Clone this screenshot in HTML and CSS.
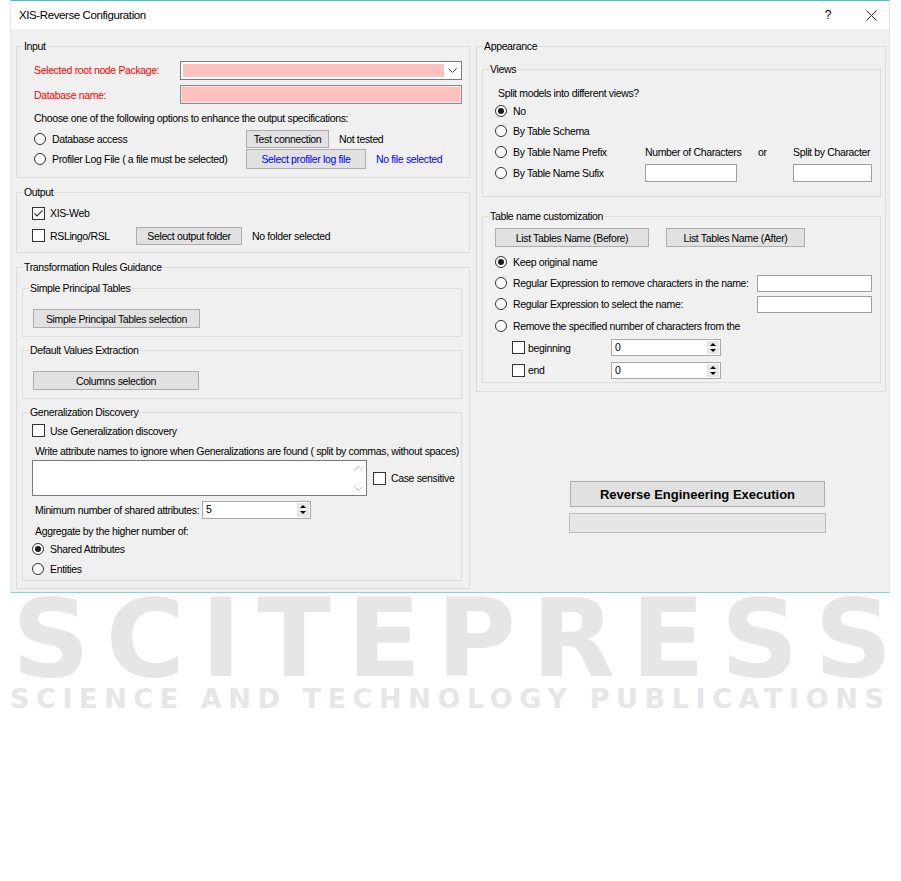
FILE: index.html
```html
<!DOCTYPE html>
<html lang="en">
<head>
  <meta charset="UTF-8">
  <title>XIS-Reverse Configuration</title>
  <link rel="stylesheet" href="styles.css">
</head>
<body>
  <div class="window">
    <!-- Title bar -->
    <div class="titlebar">
      <span class="title">XIS-Reverse Configuration</span>
      <span class="help">?</span>
      <svg class="close" width="11" height="11" viewBox="0 0 11 11"><path d="M0.5 0.5 L10.5 10.5 M10.5 0.5 L0.5 10.5" stroke="#222" stroke-width="1"/></svg>
    </div>

    <div class="client">
      <!-- Left column -->
      <div class="col-left">
        <fieldset class="group">
          <legend>Input</legend>
          <div class="input-rows">
            <div class="row">
              <span class="req-label">Selected root node Package:</span>
              <div class="combo">
                <div class="combo-fill"></div>
                <div class="combo-arrow"><svg width="9" height="5" viewBox="0 0 9 5"><path d="M0.5 0.5 L4.5 4.5 L8.5 0.5" fill="none" stroke="#444" stroke-width="1"/></svg></div>
              </div>
            </div>
            <div class="row">
              <span class="req-label">Database name:</span>
              <div class="textbox pink"></div>
            </div>
            <div class="row">Choose one of the following options to enhance the output specifications:</div>
            <div class="row">
              <span class="opt opt-input"><span class="radio"></span>Database access</span>
              <button class="btn btn-test">Test connection</button>
              <span class="status">Not tested</span>
            </div>
            <div class="row">
              <span class="opt opt-input"><span class="radio"></span>Profiler Log File ( a file must be selected)</span>
              <button class="btn btn-profiler">Select profiler log file</button>
              <span class="status blue">No file selected</span>
            </div>
          </div>
        </fieldset>

        <fieldset class="group">
          <legend>Output</legend>
          <div class="output-rows">
            <div class="row">
              <span class="opt"><span class="check"><svg width="11" height="11" viewBox="0 0 11 11"><path d="M1.5 5.5 L4 8 L9.5 2.5" fill="none" stroke="#333" stroke-width="1.1"/></svg></span>XIS-Web</span>
            </div>
            <div class="row">
              <span class="opt opt-output"><span class="check"></span>RSLingo/RSL</span>
              <button class="btn btn-folder">Select output folder</button>
              <span class="status">No folder selected</span>
            </div>
          </div>
        </fieldset>

        <fieldset class="group">
          <legend>Transformation Rules Guidance</legend>
          <div class="rules-body">
            <fieldset class="group">
              <legend>Simple Principal Tables</legend>
              <div class="sub-body">
                <button class="btn btn-simple">Simple Principal Tables selection</button>
              </div>
            </fieldset>
            <fieldset class="group">
              <legend>Default Values Extraction</legend>
              <div class="sub-body">
                <button class="btn btn-columns">Columns selection</button>
              </div>
            </fieldset>
            <fieldset class="group">
              <legend>Generalization Discovery</legend>
              <div class="gen-rows">
                <div class="row"><span class="opt"><span class="check"></span>Use Generalization discovery</span></div>
                <div class="row indent">Write attribute names to ignore when Generalizations are found ( split by commas, without spaces)</div>
                <div class="row">
                  <div class="textarea">
                    <div class="vscroll">
                      <svg width="9" height="5" viewBox="0 0 9 5"><path d="M0.5 4.5 L4.5 0.5 L8.5 4.5" fill="none" stroke="#c4c4c4" stroke-width="1"/></svg>
                      <svg width="9" height="5" viewBox="0 0 9 5"><path d="M0.5 0.5 L4.5 4.5 L8.5 0.5" fill="none" stroke="#c4c4c4" stroke-width="1"/></svg>
                    </div>
                  </div>
                  <span class="opt case"><span class="check"></span>Case sensitive</span>
                </div>
                <div class="row indent">
                  <span class="spin-label">Minimum number of shared attributes:</span>
                  <div class="spin spin-min">
                    <span class="spin-value">5</span>
                    <span class="spin-btns"><span class="up"></span><span class="down"></span></span>
                  </div>
                </div>
                <div class="row indent">Aggregate by the higher number of:</div>
                <div class="row"><span class="opt"><span class="radio on"></span>Shared Attributes</span></div>
                <div class="row"><span class="opt"><span class="radio"></span>Entities</span></div>
              </div>
            </fieldset>
          </div>
        </fieldset>
      </div>

      <!-- Right column -->
      <div class="col-right">
        <fieldset class="group">
          <legend>Appearance</legend>
          <div class="appearance-body">
            <fieldset class="group">
              <legend>Views</legend>
              <div class="views-rows">
                <div class="row indent">Split models into different views?</div>
                <div class="row"><span class="opt"><span class="radio on"></span>No</span></div>
                <div class="row"><span class="opt"><span class="radio"></span>By Table Schema</span></div>
                <div class="row split-row">
                  <span class="opt"><span class="radio"></span>By Table Name Prefix</span>
                  <span>Number of Characters</span>
                  <span>or</span>
                  <span>Split by Character</span>
                </div>
                <div class="row split-row">
                  <span class="opt"><span class="radio"></span>By Table Name Sufix</span>
                  <div class="textbox tb-chars"></div>
                  <span></span>
                  <div class="textbox tb-split"></div>
                </div>
              </div>
            </fieldset>

            <fieldset class="group table-group">
              <legend>Table name customization</legend>
              <div class="table-rows">
                <div class="row top">
                  <button class="btn btn-before">List Tables Name (Before)</button>
                  <button class="btn btn-after">List Tables Name (After)</button>
                </div>
                <div class="row"><span class="opt"><span class="radio on"></span>Keep original name</span></div>
                <div class="row spread">
                  <span class="opt"><span class="radio"></span>Regular Expression to remove characters in the name:</span>
                  <div class="textbox tb-regex"></div>
                </div>
                <div class="row spread">
                  <span class="opt"><span class="radio"></span>Regular Expression to select the name:</span>
                  <div class="textbox tb-regex"></div>
                </div>
                <div class="row"><span class="opt"><span class="radio"></span>Remove the specified number of characters from the</span></div>
                <div class="row sub">
                  <span class="opt opt-sub"><span class="check"></span>beginning</span>
                  <div class="spin spin-chars">
                    <span class="spin-value">0</span>
                    <span class="spin-btns"><span class="up"></span><span class="down"></span></span>
                  </div>
                </div>
                <div class="row sub">
                  <span class="opt opt-sub"><span class="check"></span>end</span>
                  <div class="spin spin-chars">
                    <span class="spin-value">0</span>
                    <span class="spin-btns"><span class="up"></span><span class="down"></span></span>
                  </div>
                </div>
              </div>
            </fieldset>
          </div>
        </fieldset>

        <div class="exec">
          <button class="btn btn-exec">Reverse Engineering Execution</button>
          <div class="progress"></div>
        </div>
      </div>
    </div>
  </div>

  <!-- Publisher watermark -->
  <div class="watermark">
    <div class="wm-big">SCITEPRES<span class="last">S</span></div>
    <div class="wm-small">SCIENCE AND TECHNOLOGY PUBLICATION<span class="last">S</span></div>
  </div>
</body>
</html>
```

FILE: styles.css
```css
/* General */
body {
  margin: 0;
  background: #fff;
  font-family: "Liberation Sans", Arial, sans-serif;
  font-size: 10.5px;
  letter-spacing: -0.35px;
  color: #000;
}

.window {
  margin-left: 10px;
  width: 880px;
  box-sizing: border-box;
  border-top: 1px solid #4cc6c3;
  border-bottom: 1px solid #8ad4d0;
  border-left: 1px solid #d6ecea;
  border-right: 1px solid #d6ecea;
}

/* Title bar */
.titlebar {
  height: 28px;
  display: flex;
  align-items: center;
  padding-left: 8px;
  background: #fff;
}

.title {
  font-size: 11.5px;
  letter-spacing: -0.4px;
}

.help {
  margin-left: auto;
  margin-right: 35px;
  font-size: 12px;
}

.close {
  margin-right: 12px;
}

/* Client area */
.client {
  background: #f0f0f0;
  height: 563px;
  box-sizing: border-box;
  padding: 11px 3px 0 5px;
  display: flex;
  gap: 6px;
}

.col-left {
  width: 454px;
  display: flex;
  flex-direction: column;
  gap: 8px;
}

.col-right {
  width: 410px;
}

/* Group boxes */
.group {
  margin: 0;
  padding: 0;
  min-width: 0;
  border: 1px solid #dcdcdc;
}

.group legend {
  margin-left: 6px;
  padding: 0 1px;
  line-height: 13px;
}

.row {
  display: flex;
  align-items: center;
  white-space: nowrap;
}

.row.top {
  align-items: flex-start;
}

.indent {
  padding-left: 3px;
}

/* Radios and checkboxes */
.opt {
  display: flex;
  align-items: center;
}

.radio {
  width: 12px;
  height: 12px;
  box-sizing: border-box;
  border: 1px solid #333;
  border-radius: 50%;
  background: #fff;
  margin-right: 6px;
  flex: none;
}

.radio.on::after {
  content: "";
  display: block;
  width: 6px;
  height: 6px;
  margin: 2px;
  border-radius: 50%;
  background: #1a1a1a;
}

.check {
  width: 13px;
  height: 13px;
  box-sizing: border-box;
  border: 1px solid #333;
  background: #fff;
  margin-right: 5px;
  flex: none;
  display: flex;
}

/* Buttons */
.btn {
  font-family: inherit;
  font-size: 10.5px;
  letter-spacing: -0.35px;
  color: #000;
  background: #e1e1e1;
  border: 1px solid #adadad;
  padding: 0;
  flex: none;
}

.btn-test { width: 83px; height: 18px; }
.btn-profiler { width: 120px; height: 20px; color: #0000ff; }
.btn-folder { width: 106px; height: 18px; }
.btn-simple { width: 167px; height: 19px; }
.btn-columns { width: 166px; height: 19px; }
.btn-before { width: 154px; height: 19px; }
.btn-after { width: 139px; height: 19px; }

.status {
  margin-left: 10px;
}

.blue {
  color: #0000ff;
}

/* Text inputs */
.textbox {
  height: 18px;
  box-sizing: border-box;
  border: 1px solid #a0a0a0;
  background: #fff;
}

.textbox.pink {
  flex: 1;
  height: 19px;
  border-color: #8c8c8c;
  background: #ffc0c0;
  box-shadow: inset 0 0 0 1px #f4e4e4;
}

.combo {
  flex: 1;
  height: 19px;
  box-sizing: border-box;
  border: 1px solid #7a7a7a;
  background: #fff;
  padding: 2px 0 2px 2px;
  display: flex;
}

.combo-fill {
  flex: 1;
  background: #ffc0c0;
}

.combo-arrow {
  width: 17px;
  display: flex;
  align-items: center;
  justify-content: center;
}

/* Input group */
.input-rows {
  display: grid;
  grid-template-rows: 24px 25px 22px 19px 22px;
  padding: 5px 7px 7px 17px;
}

.req-label {
  width: 146px;
  color: #ff0000;
}

.opt-input {
  width: 212px;
}

/* Output group */
.output-rows {
  display: grid;
  grid-template-rows: 22px 23px;
  padding: 3px 0 5px 15px;
}

.opt-output {
  width: 104px;
}

/* Transformation rules */
.rules-body {
  display: flex;
  flex-direction: column;
  gap: 7px;
  padding: 8px 7px 7px 5px;
}

.sub-body {
  padding: 14px 0 8px 10px;
}

.gen-rows {
  display: grid;
  grid-template-rows: 23px 18px 36px 27px 16px 20px 20px;
  padding: 0 0 1px 9px;
}

.textarea {
  width: 335px;
  height: 36px;
  box-sizing: border-box;
  border: 1px solid #7a7a7a;
  background: #fff;
  display: flex;
  justify-content: flex-end;
}

.vscroll {
  width: 15px;
  display: flex;
  flex-direction: column;
  justify-content: space-between;
  align-items: center;
  padding: 5px 0 4px;
}

.case {
  margin-left: 6px;
}

.spin-label {
  width: 167px;
}

.spin {
  height: 18px;
  box-sizing: border-box;
  border: 1px solid #a9a9a9;
  background: #fff;
  display: flex;
}

.spin-min { width: 109px; }
.spin-chars { width: 110px; height: 17px; }

.spin-value {
  flex: 1;
  padding-left: 3px;
  line-height: 15px;
}

.spin-btns {
  width: 12px;
  margin: 1px;
  display: flex;
  flex-direction: column;
  gap: 1px;
}

.spin-btns span {
  flex: 1;
  background: #e6e6e6;
  position: relative;
}

.spin-btns .up::after,
.spin-btns .down::after {
  content: "";
  position: absolute;
  left: 3px;
  top: 2px;
  border-left: 3px solid transparent;
  border-right: 3px solid transparent;
}

.spin-btns .up::after {
  border-bottom: 3px solid #000;
}

.spin-btns .down::after {
  top: 1px;
  border-top: 3px solid #000;
}

/* Appearance */
.appearance-body {
  padding: 10px 4px 8px 5px;
}

.views-rows {
  display: grid;
  grid-template-rows: 17px 19px 21px 21px 21px;
  padding: 8px 0 13px 12px;
}

.split-row {
  display: grid;
  grid-template-columns: 150px 113px 35px auto;
  align-items: center;
}

.tb-chars { width: 92px; height: 18px; }
.tb-split { width: 79px; height: 18px; }

.table-group {
  margin-top: 13px;
}

.table-rows {
  display: grid;
  grid-template-rows: 23px 22px 20px 22px 21px 23px 22px;
  padding: 5px 8px 1px 12px;
}

.table-rows .top {
  gap: 17px;
}

.spread {
  justify-content: space-between;
}

.tb-regex {
  width: 115px;
  height: 17px;
}

.sub {
  padding-left: 17px;
}

.opt-sub {
  width: 99px;
}

.opt-sub .check {
  margin-right: 3px;
}

/* Execution */
.exec {
  margin-top: 89px;
  padding-left: 94px;
  display: flex;
  flex-direction: column;
  gap: 6px;
}

.btn-exec {
  width: 255px;
  height: 26px;
  font-size: 13px;
  font-weight: bold;
  letter-spacing: normal;
}

.progress {
  width: 257px;
  height: 20px;
  margin-left: -1px;
  box-sizing: border-box;
  border: 1px solid #bcbcbc;
  background: #e6e6e6;
}

/* Watermark */
.watermark {
  padding-left: 12px;
  color: #e6e6e6;
  font-family: "DejaVu Sans", sans-serif;
  font-weight: bold;
  letter-spacing: normal;
  white-space: nowrap;
}

.wm-big {
  font-size: 108px;
  line-height: 90px;
  letter-spacing: 16px;
  margin-top: 1px;
}

.wm-small {
  font-size: 27px;
  line-height: 30px;
  letter-spacing: 6.6px;
  margin-left: -2px;
}

.watermark .last {
  letter-spacing: 0;
}
```
